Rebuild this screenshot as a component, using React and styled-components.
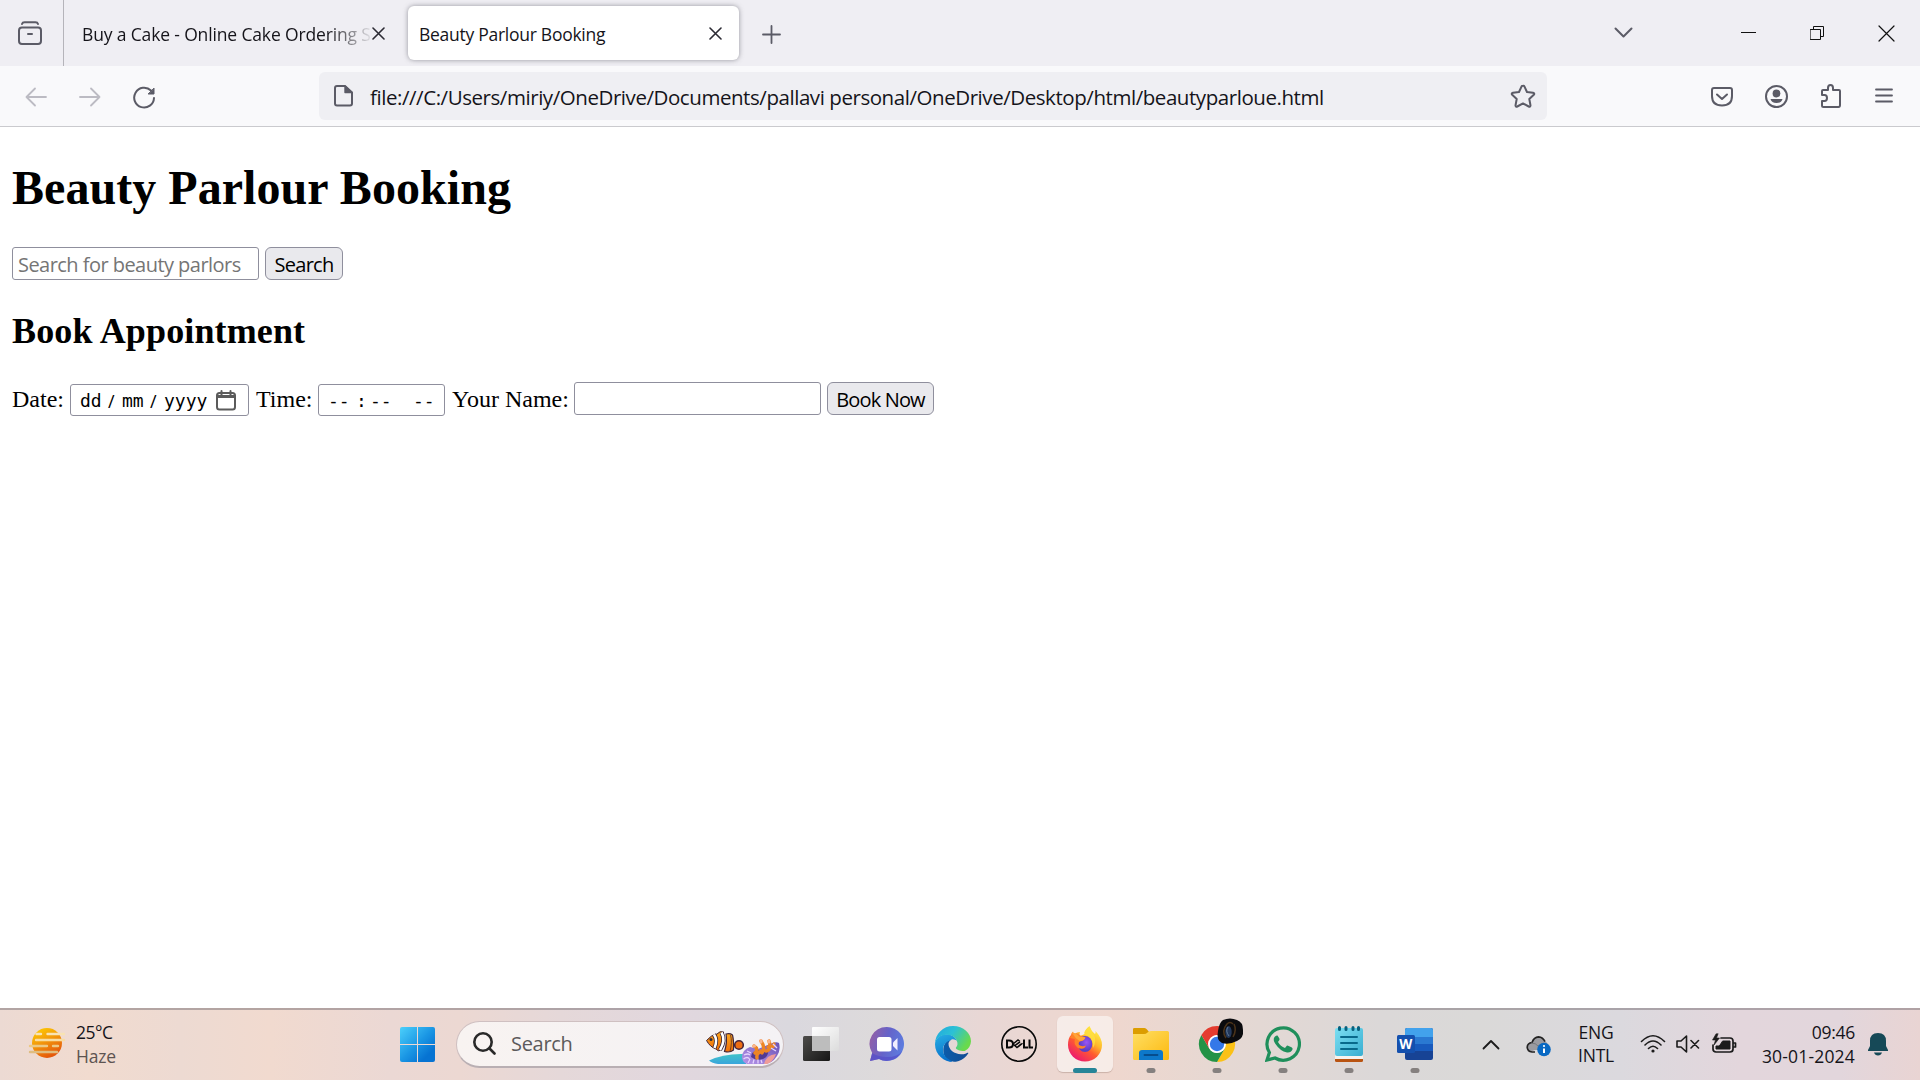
import React from "react";
import styled, { createGlobalStyle } from "styled-components";

const Global = createGlobalStyle`
  * { box-sizing: border-box; }
  html, body, #root { height: 100%; }
  body { margin: 0; overflow: hidden; background: #fff; }
  svg { display: block; flex: none; }
`;

const ui = `"Open Sans", "Noto Sans", sans-serif`;
const serif = `"Liberation Serif", "Times New Roman", serif`;

const Screen = styled.div`
  width: 1920px;
  height: 1080px;
  display: flex;
  flex-direction: column;
  font-family: ${ui};
  color: #15141a;
`;

const Label = styled.span`
  font-size: ${(p) => p.$size}px;
  letter-spacing: ${(p) => p.$track || 0}px;
  line-height: ${(p) => p.$line || 24}px;
  color: ${(p) => p.$color || "inherit"};
  white-space: nowrap;
`;

/* ---------- browser chrome ---------- */

const TabStrip = styled.header`
  display: flex;
  height: 66px;
  flex: none;
  background: #efeef3;
`;

const RecentButton = styled.div`
  width: 64px;
  padding: 21px 0 0 17px;
  border-right: 1px solid #b5b4ba;
`;

const Tab = styled.div`
  display: flex;
  align-items: center;
  width: 331px;
  height: 54px;
  margin: 6px 0 0 ${(p) => p.$gap}px;
  padding: 0 17px 0 ${(p) => p.$indent}px;
  justify-content: space-between;
  border-radius: 6px;
  background: ${(p) => (p.$active ? "#fff" : "transparent")};
  box-shadow: ${(p) => (p.$active ? "0 0 5px rgba(90, 90, 100, 0.6)" : "none")};
`;

const TabTitle = styled(Label)`
  width: 289px;
  padding-top: 1px;
  mask-image: ${(p) => (p.$fade ? "linear-gradient(to right, #000 245px, transparent 292px)" : "none")};
`;

const NewTab = styled.div`
  padding: 25px 0 0 23px;
`;

const WindowControls = styled.div`
  display: flex;
  align-items: center;
  margin-left: auto;
  padding-right: 25px;
`;

const Spaced = styled.div`
  margin-left: ${(p) => p.$left || 0}px;
  padding-top: ${(p) => p.$drop || 0}px;
`;

const NavBar = styled.nav`
  display: flex;
  align-items: center;
  height: 61px;
  flex: none;
  padding: 0 26px 0 24px;
  background: #f9f9fb;
  border-bottom: 1px solid #cacace;
`;

const AddressBar = styled.div`
  display: flex;
  align-items: center;
  width: 1228px;
  height: 48px;
  margin-left: 163px;
  padding: 0 11px 0 13px;
  border-radius: 6px;
  background: #efeff3;
`;

const Address = styled(Label)`
  margin-left: 16px;
  padding-top: 1px;
  flex: 1;
`;

/* ---------- page ---------- */

const Page = styled.main`
  flex: 1;
  min-height: 0;
  padding: 0 12px;
  background: #fff;
  font-family: ${serif};
  font-size: 24px;
  color: #000;
`;

const Title = styled.h1`
  margin: 0;
  padding-top: 33px;
  font-size: 48px;
  line-height: 55px;
  letter-spacing: 0.05px;
`;

const Subtitle = styled.h2`
  margin: 31px 0 0;
  font-size: 36px;
  line-height: 41px;
  letter-spacing: 0.13px;
`;

const Row = styled.div`
  display: flex;
  align-items: flex-start;
  margin-top: ${(p) => p.$top}px;
`;

const TextField = styled.input`
  width: ${(p) => p.$width}px;
  height: 33px;
  margin: 0 6px 0 0;
  padding: 1px 5px 0;
  border: 1px solid #8f8f9d;
  border-radius: 3px;
  outline: none;
  background: #fff;
  font: 20px ${ui};
  letter-spacing: -0.54px;
  &::placeholder { color: #757575; opacity: 1; }
`;

const Button = styled.button`
  width: ${(p) => p.$width}px;
  height: 33px;
  padding: 1px 0 0;
  border: 1px solid #8f8f9d;
  border-radius: 6px;
  background: #e9e9ed;
  color: #000;
  font: 20px ${ui};
  letter-spacing: ${(p) => p.$track}px;
  white-space: nowrap;
`;

const FieldLabel = styled.label`
  width: ${(p) => p.$width}px;
  line-height: 28px;
  margin-top: 3px;
  white-space: nowrap;
`;

const PickerField = styled.div`
  display: flex;
  align-items: center;
  width: ${(p) => p.$width}px;
  height: 32px;
  margin: 2px 7px 0 0;
  padding-left: 9px;
  border: 1px solid #8f8f9d;
  border-radius: 3px;
  font-family: "DejaVu Sans Mono", monospace;
  font-size: 18px;
`;

const Part = styled.span`
  width: ${(p) => p.$width}px;
  line-height: 28px;
  padding-top: 1px;
  font-family: ${(p) => (p.$mono ? "inherit" : ui)};
  white-space: pre;
`;

/* ---------- taskbar ---------- */

const Taskbar = styled.footer`
  display: flex;
  align-items: center;
  height: 72px;
  flex: none;
  padding-bottom: 2px;
  border-top: 2px solid rgba(120, 110, 115, 0.5);
  background: linear-gradient(to right, #ecdad3 0, #f1dbcf 90px, #eddad2 180px, #f1dacf 270px, #ebd8d4 390px, #ecd8d2 460px,
    #e5d8d9 560px, #e1d7de 680px, #dad8de 790px, #dddadb 880px, #e8d7d5 980px, #efd7ce 1110px,
    #e5d8d3 1230px, #dbd8d8 1380px, #dad9d8 1480px, #dbd9de 1620px, #e3d6dc 1740px, #e2d6dc 1840px, #e9d4d3 1920px);
  background-origin: border-box;
`;

const Weather = styled.div`
  display: flex;
  align-items: center;
  width: 400px;
  padding-left: 28px;
`;

const Stack = styled.div`
  display: flex;
  flex-direction: column;
  align-items: ${(p) => p.$align || "flex-start"};
  width: ${(p) => (p.$width ? p.$width + "px" : "auto")};
  margin-left: ${(p) => p.$left || 0}px;
`;

const SearchPill = styled.div`
  display: flex;
  align-items: center;
  width: 328px;
  height: 47px;
  margin-left: 21px;
  padding-left: 16px;
  border-radius: 24px;
  border: 1px solid #cfc0c1;
  border-bottom: 2px solid #b9afb3;
  background: linear-gradient(to right, #f8f3f1, #f4f2f5);
  overflow: hidden;
`;

const Apps = styled.div`
  display: flex;
  align-items: center;
  margin-left: 4px;
`;

const AppSlot = styled.div`
  display: flex;
  width: 56px;
  height: 56px;
  margin: 0 5px;
  align-items: center;
  justify-content: center;
  position: relative;
  border-radius: 6px;
  background: ${(p) => (p.$active ? "rgba(255,255,255,0.52)" : "transparent")};
  box-shadow: ${(p) => (p.$active ? "0 1px 1px rgba(120,90,80,0.3)" : "none")};
`;

const Indicator = styled.i`
  position: absolute;
  bottom: -1px;
  left: 50%;
  transform: translateX(-50%);
  width: ${(p) => (p.$active ? 24 : 9)}px;
  height: 5px;
  border-radius: 3px;
  background: ${(p) => (p.$active ? "#268598" : "#85807f")};
`;

const Tray = styled.div`
  display: flex;
  align-items: center;
  margin-left: auto;
  padding-right: 32px;
`;

function Icon({ w = 24, h, box, stroke = "#5b5b66", sw = 2, fill = "none", children }) {
  const hh = h || w;
  return (
    <svg width={w} height={hh} viewBox={box || `0 0 ${w} ${hh}`} fill={fill} stroke={stroke} strokeWidth={sw} strokeLinecap="round" strokeLinejoin="round">
      {children}
    </svg>
  );
}

const CloseIcon = () => (
  <Icon w={13} stroke="#2b2a33" sw={1.6}><path d="M1 1l11 11M12 1L1 12" /></Icon>
);

function HazeIcon() {
  return (
    <svg width="38" height="32" viewBox="0 0 38 32">
      <defs>
        <linearGradient id="haze" x1="0" y1="0" x2=".5" y2="1">
          <stop offset="0" stopColor="#ffd300" /><stop offset=".5" stopColor="#f39a0b" /><stop offset="1" stopColor="#e5590b" />
        </linearGradient>
      </defs>
      <circle cx="19" cy="15" r="15" fill="url(#haze)" />
      <g strokeLinecap="round" strokeWidth="2.4" fill="none">
        <path d="M8.500 6H13M19.500 6H36" stroke="#f8e3b4" />
        <path d="M8 12H36" stroke="#f8dda2" />
        <path d="M2 18H19M25 18H30" stroke="#ecc985" />
        <path d="M2 24H29" stroke="#dfbd80" />
      </g>
    </svg>
  );
}

function WindowsIcon() {
  return (
    <svg width="35" height="35" viewBox="0 0 35 35">
      <defs>
        <linearGradient id="win" x1="0" y1="0" x2="35" y2="35" gradientUnits="userSpaceOnUse">
          <stop offset="0" stopColor="#4cd0fb" /><stop offset=".5" stopColor="#1a96e4" /><stop offset=".8" stopColor="#0673d2" />
        </linearGradient>
      </defs>
      <g fill="url(#win)">
        <path d="M2 0H17V17H0V2Q0 0 2 0z" /><path d="M18 0H33Q35 0 35 2V17H18z" />
        <path d="M0 18H17V35H2Q0 35 0 33z" /><path d="M18 18H35V33Q35 35 33 35H18z" />
      </g>
    </svg>
  );
}

function ReefArt() {
  return (
    <svg width="76" height="40" viewBox="0 0 76 40">
      <defs>
        <linearGradient id="sea" x1="0" y1="0" x2="0" y2="1"><stop offset="0" stopColor="#40c3c8" /><stop offset="1" stopColor="#3aa5dc" /></linearGradient>
        <linearGradient id="shell" x1="0" y1="1" x2="1" y2="0"><stop offset="0" stopColor="#b796ea" /><stop offset="1" stopColor="#6a52b5" /></linearGradient>
        <linearGradient id="fish" x1="0" y1="0" x2="0" y2="1"><stop offset="0" stopColor="#fba51c" /><stop offset="1" stopColor="#ee6d0b" /></linearGradient>
      </defs>
      <path d="M3 36.500Q18 29 40 30V40H12Q6 39 3 36.500z" fill="url(#sea)" />
      <path d="M.5 16.500Q5 11 11 10Q14 6.500 17.500 8V12L15 26Q12 28 10 25Q4 23 .5 16.500z" fill="url(#fish)" stroke="#40263a" strokeWidth="1" />
      <path d="M8 10.500Q12 16 8.500 24M15.500 8.500Q20 16 14 26" stroke="#3a2636" strokeWidth="4.200" fill="none" />
      <path d="M8 10.500Q12 16 8.500 24M15.500 8.500Q20 16 14 26" stroke="#fff" strokeWidth="2.600" fill="none" />
      <path d="M20 10Q24 9 26.500 11Q28 17 27.500 26Q24 29 18.500 27.500Q21.500 18 20 10z" fill="url(#fish)" stroke="#40263a" strokeWidth="1.200" />
      <path d="M24.500 11Q26.500 18 24 27.500" stroke="#5a3022" strokeWidth=".8" fill="none" />
      <circle cx="5" cy="15.500" r="1.500" fill="#2a2c3c" />
      <circle cx="33" cy="21" r="4.300" fill="#ee6d14" stroke="#47253a" strokeWidth="1.600" />
      <path d="M36 33Q36 26 44 23L52 25L64 20Q70 17 73 19Q75 26 71 32Q66 40 58 40H41Q36 38 36 33z" fill="url(#shell)" />
      <path d="M58 40Q60 31 70 30Q67 38 61 40z" fill="#ef9d98" />
      <path d="M45 33Q45 27 53 26H62Q63 32 57 35Q50 37 45 33z" fill="#533a92" />
      <g stroke="#ee8424" strokeWidth="3.400" strokeLinecap="round" fill="none">
        <path d="M51 34Q50 30 55 27M49 29Q53 25 48 22M56 29Q60 24 55 17M60 27Q66 26 63 17M62 23Q68 24 68 20" />
      </g>
      <path d="M55 16.500v1.500M63 17v1M47.500 22h1" stroke="#f8b690" strokeWidth="3" strokeLinecap="round" />
      <path d="M38 31q4-2 6 0M37.500 35q4-3 6 0M42 39l2-4M47 39.500l1-4M52 39.500v-4M56 39l-1-3M67 20l4 4M65 24l5 3M41 27l4 2" stroke="#e5d2fd" strokeWidth="1.300" fill="none" />
    </svg>
  );
}

function TaskViewIcon() {
  return (
    <svg width="36" height="36" viewBox="0 0 36 36">
      <defs>
        <linearGradient id="tvd" x1="0" y1="0" x2="1" y2="1"><stop offset="0" stopColor="#4d4c4a" /><stop offset="1" stopColor="#161616" /></linearGradient>
        <linearGradient id="tvl" x1="0" y1="0" x2="1" y2="1"><stop offset="0" stopColor="#fff" /><stop offset="1" stopColor="#dcdcdc" /></linearGradient>
      </defs>
      <rect x="0" y="10" width="27" height="25" rx="1.500" fill="url(#tvd)" />
      <rect x="9" y="1" width="27" height="24" rx="1" fill="url(#tvl)" />
      <rect x="9" y="10" width="18" height="15" fill="#bdbdbd" />
    </svg>
  );
}

function ChatIcon() {
  return (
    <svg width="36" height="36" viewBox="0 0 36 36">
      <defs><linearGradient id="chat" x1="0" y1=".2" x2="1" y2=".5"><stop offset="0" stopColor="#955fa5" /><stop offset=".5" stopColor="#6563c9" /><stop offset="1" stopColor="#5d7cdf" /></linearGradient></defs>
      <path d="M18 1A17 17 0 1 1 10 33L1 35L3.200 27A17 17 0 0 1 18 1z" fill="url(#chat)" />
      <path d="M3.200 27Q9 31 18 31Q29 31 33 25A17 17 0 0 1 10 33L1 35z" fill="#554fca" opacity=".75" />
      <rect x="8" y="11" width="14.500" height="14.500" rx="2.500" fill="#fff" />
      <path d="M24 16.500L28.500 12V24.500L24 20z" fill="#f1efff" />
    </svg>
  );
}

function EdgeIcon() {
  return (
    <svg width="36" height="36" viewBox="0 0 256 256">
      <defs>
        <linearGradient id="edgeA" x1="0" y1="0" x2="1" y2="0"><stop offset="0" stopColor="#0b5cab" /><stop offset="1" stopColor="#124b93" /></linearGradient>
        <linearGradient id="edgeB" x1="0" y1="0" x2=".3" y2="1"><stop offset="0" stopColor="#28afe4" /><stop offset="1" stopColor="#0870cb" /></linearGradient>
        <linearGradient id="edgeC" x1="0" y1="0" x2="1" y2=".5"><stop offset="0" stopColor="#20a7e0" /><stop offset=".5" stopColor="#2cc1d5" /><stop offset="1" stopColor="#69da4c" /></linearGradient>
      </defs>
      <path d="M231 190a94 94 0 0 1-10 5 102 102 0 0 1-36 6c-47 0-89-32-89-74 0-11 7-22 17-28-43 2-54 47-54 73 0 74 68 82 83 82 8 0 20-2 27-5a128 128 0 0 0 67-53c3-5-2-8-5-6z" fill="url(#edgeA)" />
      <path d="M106 241a79 79 0 0 1-49-70c0-37 20-62 56-72 2-1 8-4 15-4 11 0 21 5 27 13-7-31-43-49-73-49C39 59 0 91 0 130c0 76 65 126 128 126-8-2-14-9-22-15z" fill="url(#edgeB)" />
      <path d="M152 149c-1 1-4 3-4 7s3 7 7 10c20 14 57 12 57 12a84 84 0 0 0 44-70C256 53 204 0 128 0 58 0 1 55 0 128c4-36 39-65 82-65 3 0 65-2 77 55 4 19-5 29-7 31z" fill="url(#edgeC)" />
    </svg>
  );
}

function DellIcon() {
  return (
    <svg width="36" height="36" viewBox="0 0 36 36">
      <circle cx="18" cy="18" r="17.200" fill="none" stroke="#080808" strokeWidth="1.600" />
      <g fill="none" stroke="#080808" strokeWidth="2">
        <path d="M6 14.500h2q4 0 4 3.500t-4 3.500h-2z" />
        <path d="M12 18L17 14L19 15.500M12 18L16 21.500L20 18M14 19.500L19 15.800M17 21L21.500 17.200" strokeWidth="1.500" />
        <path d="M23 13.500v8h4M28.500 13.500v8h3.500" />
      </g>
    </svg>
  );
}

function FirefoxIcon() {
  return (
    <svg width="36" height="36" viewBox="0 0 36 36">
      <defs>
        <linearGradient id="ffA" x1=".85" y1=".1" x2=".25" y2=".95"><stop offset="0" stopColor="#fff04a" /><stop offset=".35" stopColor="#ffb82a" /><stop offset=".6" stopColor="#ff5b2f" /><stop offset="1" stopColor="#ed1a6f" /></linearGradient>
        <radialGradient id="ffB" cx=".6" cy=".4"><stop offset="0" stopColor="#9a55f5" /><stop offset="1" stopColor="#5b3fc4" /></radialGradient>
      </defs>
      <path d="M22.500 0Q24 5 28 8Q29 7 28.500 5Q35 12 35 19A17 16.500 0 0 1 1 19Q1 12 4 9Q4 7 6 5.500Q6 7 8 7.500Q10 6 13 6Q12 8 13 10L18 8Q17 4 22.500 0z" fill="url(#ffA)" />
      <ellipse cx="18" cy="18" rx="7.300" ry="8" fill="url(#ffB)" />
      <path d="M3 12Q5 7 11 8Q14 10.500 18.500 11.500Q17 15 13 15.500Q11 16.500 12 19Q15 21 19 19.500Q17 24.500 11 22Q6 18 8 13z" fill="#ff8228" />
      <path d="M5 7Q10 7 12 10.500L18.500 11.500Q17 15 12.500 15Q8 12 5 7z" fill="#ffa437" />
      <path d="M18 9Q27 11 26 22Q30 15 27 9L22.500 1Q15 6 18 9z" fill="#ffe13f" opacity=".8" />
    </svg>
  );
}

function FolderIcon() {
  return (
    <svg width="36" height="36" viewBox="0 0 36 36">
      <defs><linearGradient id="fold" x1="0" y1="0" x2="1" y2="1"><stop offset="0" stopColor="#ffdf63" /><stop offset="1" stopColor="#fcb910" /></linearGradient></defs>
      <path d="M0 3Q0 2 1.500 2H11.500Q13 2 14 3.500L16 6V14H0z" fill="#dc9d00" />
      <path d="M0 8H11Q13 8 14.500 6.500Q16 5 18 5H34.500Q36 5 36 6.500V32.500Q36 34 34.500 34H1.500Q0 34 0 32.500z" fill="url(#fold)" />
      <path d="M6 34V27Q6 24 9 24H27Q30 24 30 27V34z" fill="#0d78ca" />
      <path d="M11.500 29H24.500" stroke="#064d8d" strokeWidth="1.800" strokeLinecap="round" />
    </svg>
  );
}

const Overflowing = styled.svg`
  overflow: visible;
`;

function ChromeIcon() {
  return (
    <Overflowing width="36" height="36" viewBox="0 0 36 36">
      <path d="M18 9H33.600A18 18 0 0 1 18 36L25.800 22.500z" fill="#fbc116" />
      <path d="M2.400 9L10.200 22.500Q13 27 18 27Q22 27 25.800 22.500L18 36A18 18 0 0 1 2.400 9z" fill="#249346" />
      <path d="M2.400 9A18 18 0 0 1 33.600 9H18Q9 10 10.200 22.500z" fill="#e43b2f" />
      <circle cx="18" cy="18" r="9" fill="#fff" /><circle cx="18" cy="18" r="7.200" fill="#3478e8" />
      <path d="M24-6Q31-9 38-6Q44-4 44 4Q45 12 38 15Q30 19 23 17Q17 14 19 5Q20-3 24-6z" fill="#0b0b0e" />
      <path d="M27 12Q22 5 28-2M34 11Q38 4 35-2M28-2Q31-5 34-2" fill="none" stroke="#6e4a20" strokeWidth="1.500" opacity=".65" />
      <ellipse cx="29.500" cy="6" rx="3.200" ry="6" fill="#24395c" /><path d="M29 1q-3 4 1 9" stroke="#66809f" strokeWidth=".9" fill="none" />
    </Overflowing>
  );
}

function WhatsAppIcon() {
  return (
    <svg width="36" height="36" viewBox="0 0 36 36">
      <path d="M2 34L4.400 26.500A16.200 16.200 0 1 1 10 32z" fill="none" stroke="#1f8f5b" strokeWidth="3.200" />
      <path d="M12.500 9.500Q11 9 9.500 11Q7.500 14 10.500 18Q15 25 22 26.500Q26 27 27.500 23.500Q28 22 26.500 21.300L23 19.700Q22 19.300 21.200 20.400L20 22Q15.500 20.500 13 16L14.200 14.300Q14.800 13.500 14.400 12.500z" fill="#1f8f5b" />
    </svg>
  );
}

function NotepadIcon() {
  return (
    <svg width="36" height="36" viewBox="0 0 36 36">
      <defs><linearGradient id="note" x1="0" y1="0" x2="1" y2="1"><stop offset="0" stopColor="#7cdff2" /><stop offset="1" stopColor="#39aed1" /></linearGradient></defs>
      <path d="M4 30H32V34.500Q32 36 30.500 36H5.500Q4 36 4 34.500z" fill="#b95412" />
      <path d="M4 28H32V33H4z" fill="#f7f3ef" />
      <rect x="4" y="2" width="28" height="28" rx="2" fill="url(#note)" />
      <path d="M8.500 1.500v2M15 1.500v2M22 1.500v2M27.500 1.500v2" stroke="#08617e" strokeWidth="3" strokeLinecap="round" />
      <path d="M10 11H26M10 17H26M10 23H26" stroke="#08698b" strokeWidth="2" strokeLinecap="round" />
    </svg>
  );
}

const WordLetter = styled.text`
  font: 700 13.500px ${ui};
  fill: #fff;
`;

function WordIcon() {
  return (
    <svg width="36" height="36" viewBox="0 0 36 36">
      <rect x="8" y="2" width="28" height="32" rx="2" fill="#174395" />
      <path d="M8 11V4Q8 2 10 2H34Q36 2 36 4V11z" fill="#42a2ec" />
      <path d="M8 11H36V18H8z" fill="#2a79d2" /><path d="M8 18H36V25H8z" fill="#185abd" />
      <rect x="0" y="9" width="18" height="18" rx="1.500" fill="#1450ae" />
      <WordLetter x="2.200" y="22.800">W</WordLetter>
    </svg>
  );
}

const CloudBadge = () => (
  <svg width="25" height="22" viewBox="0 0 25 22">
    <path d="M5 16.500Q1 15.500 1.200 11.500Q1.700 8 5.500 7.500Q7 2 12 2Q17 2 18.500 6.500Q22 7 22 11V15H9z" fill="#9b9ba0" />
    <path d="M9 17H6Q1.500 16.500 1.200 12.200Q1.500 8 6 7.500Q8 2 12.500 1.800Q17 2 19 6.700" fill="none" stroke="#222" strokeWidth="1.700" />
    <path d="M5 8Q10 8 12 11L17 9" stroke="#77787b" fill="none" />
    <circle cx="18" cy="14.500" r="6.800" fill="#0969c3" />
    <path d="M18 13.500V18" stroke="#fff" strokeWidth="2" /><circle cx="18" cy="11" r="1.100" fill="#fff" />
  </svg>
);

const apps = [
  { name: "taskview", art: <TaskViewIcon /> },
  { name: "chat", art: <ChatIcon /> },
  { name: "edge", art: <EdgeIcon /> },
  { name: "dell", art: <DellIcon /> },
  { name: "firefox", art: <FirefoxIcon />, active: true },
  { name: "folder", art: <FolderIcon />, open: true },
  { name: "chrome", art: <ChromeIcon />, open: true },
  { name: "whatsapp", art: <WhatsAppIcon />, open: true },
  { name: "notepad", art: <NotepadIcon />, open: true },
  { name: "word", art: <WordIcon />, open: true },
];

function BrowserTabs() {
  return (
    <TabStrip>
      <RecentButton>
        <Icon w={26} h={24} sw={2}>
          <path d="M5 3Q5.500 1.300 7.500 1.300H18.500Q20.500 1.300 21 3" />
          <rect x="2" y="6.500" width="22" height="16.500" rx="3" /><path d="M11 13H15" />
        </Icon>
      </RecentButton>
      <Tab $gap={7} $indent={11}>
        <TabTitle $fade $size={17.5} $track={-0.15}>Buy a Cake - Online Cake Ordering S</TabTitle>
        <CloseIcon />
      </Tab>
      <Tab $active $gap={6} $indent={11}>
        <TabTitle $size={17.5} $track={-0.27}>Beauty Parlour Booking</TabTitle>
        <CloseIcon />
      </Tab>
      <NewTab><Icon w={19} sw={1.8}><path d="M9.500 1V18M1 9.500H18" /></Icon></NewTab>
      <WindowControls>
        <Icon w={19} h={12}><path d="M1.500 1.500L9.500 9.500L17.500 1.500" /></Icon>
        <Spaced $left={108}><Icon w={15} h={3} sw={1} stroke="#111"><path d="M0 .5H15" /></Icon></Spaced>
        <Spaced $left={54}><Icon w={15} sw={1} stroke="#111"><path d="M.5 3.500H10.500V13.500H.5zM3.500 3.500V.5H13.500V10.500H10.500" /></Icon></Spaced>
        <Spaced $left={53}><Icon w={17} sw={1.2} stroke="#111"><path d="M1 1L16 16M16 1L1 16" /></Icon></Spaced>
      </WindowControls>
    </TabStrip>
  );
}

function Navigation() {
  return (
    <NavBar>
      <Spaced $drop={2}><Icon stroke="#bcbbc3" sw={1.8}><path d="M22 12H2.500M11 3.500L2.500 12L11 20.500" /></Icon></Spaced>
      <Spaced $left={30} $drop={2}><Icon stroke="#bcbbc3" sw={1.8}><path d="M2 12H21.500M13 3.500L21.500 12L13 20.500" /></Icon></Spaced>
      <Spaced $left={30} $drop={2}>
        <Icon><path d="M22 13A9.900 9.900 0 1 1 19 5.500" /><path d="M22 3.500V9H16.500z" fill="#5b5b66" strokeWidth="1" /></Icon>
      </Spaced>
      <AddressBar>
        <Icon w={22}><path d="M5 1H13L20 7.500V18.500Q20 20.500 18 20.500H5Q3 20.500 3 18.500V3Q3 1 5 1z" /><path d="M13 1V7.500H20z" fill="#5b5b66" strokeWidth="1.400" /></Icon>
        <Address $size={20.5} $track={-0.44} $line={28}>
          file:///C:/Users/miriy/OneDrive/Documents/pallavi personal/OneDrive/Desktop/html/beautyparloue.html
        </Address>
        <Icon w={26} h={24}><path d="M13 1.800Q14 1.500 14.500 2.600L17 8L23 8.800Q25 9.500 23.800 10.800L19.300 15L20.500 21.500Q20.300 23.200 18.700 22.500L13 19.400L7.300 22.500Q5.700 23.200 5.500 21.500L6.700 15L2.200 10.800Q1 9.500 3 8.800L9 8L11.500 2.600Q12 1.700 13 1.800z" /></Icon>
      </AddressBar>
      <Spaced $left={163} $drop={1}><Icon w={24} h={22}><path d="M4 2H20Q22 2 22 4V10Q22 19.500 12 19.500Q2 19.500 2 10V4Q2 2 4 2zM7 8.500L12 13L17 8.500" /></Icon></Spaced>
      <Spaced $left={30} $drop={1}><Icon w={25}><circle cx="12.500" cy="12.500" r="10.500" /><circle cx="12.500" cy="9.500" r="3.900" fill="#5b5b66" stroke="none" /><path d="M6.500 15H18.500Q17.500 19 12.500 19T6.500 15z" fill="#5b5b66" stroke="none" /></Icon></Spaced>
      <Spaced $left={30}><Icon w={24} h={26}><path d="M3 12V8Q3 7 4 7H9V5Q9 2 11.500 2T14 5V7H20Q21 7 21 8V22Q21 24 19.500 24H4.500Q3 24 3 22.500V18H5.500Q8 18 8 15T5.500 12z" /></Icon></Spaced>
      <Spaced $left={31}><Icon w={20} h={18} sw={1.8}><path d="M2 2.500H18M2 8.500H18M2 14.500H18" /></Icon></Spaced>
    </NavBar>
  );
}

function BookingPage() {
  return (
    <Page>
      <Title>Beauty Parlour Booking</Title>
      <Row $top={32}>
        <TextField $width={247} placeholder="Search for beauty parlors" />
        <Button $width={78} $track={-0.75}>Search</Button>
      </Row>
      <Subtitle>Book Appointment</Subtitle>
      <Row $top={30}>
        <FieldLabel $width={58}>Date:</FieldLabel>
        <PickerField $width={179}>
          <Part $mono $width={28}>dd</Part><Part $width={14}>/</Part>
          <Part $mono $width={28}>mm</Part><Part $width={14}>/</Part>
          <Part $mono $width={52}>yyyy</Part>
          <Icon w={20} h={21} stroke="#5b5b5b"><rect x="1" y="3" width="18" height="16.500" rx="2.500" /><path d="M2 5H18V8H2z" fill="#5b5b5b" stroke="none" /><path d="M5.500 1V5M14.500 1V5" /></Icon>
        </PickerField>
        <FieldLabel $width={62}>Time:</FieldLabel>
        <PickerField $width={127}>
          <Part $mono $width={28}>--</Part><Part $mono $width={14}>:</Part>
          <Part $mono $width={43}>--</Part><Part $mono $width={23}>--</Part>
        </PickerField>
        <FieldLabel $width={122}>Your Name:</FieldLabel>
        <TextField $width={247} />
        <Button $width={107} $track={-0.85}>Book Now</Button>
      </Row>
    </Page>
  );
}

function SystemBar() {
  return (
    <Taskbar>
      <Weather>
        <HazeIcon />
        <Stack $left={10}>
          <Label $size={17.5} $track={-0.5}>25°C</Label>
          <Label $size={17.5} $track={-0.2} $color="#5d5451">Haze</Label>
        </Stack>
      </Weather>
      <WindowsIcon />
      <SearchPill>
        <Icon w={23} stroke="#292929" sw={2.6}><circle cx="10" cy="10" r="8.700" /><path d="M16.500 16.500L21.500 21.500" /></Icon>
        <Stack $left={15} $width={195}><Label $size={20} $track={-0.3} $color="#5c5a5b">Search</Label></Stack>
        <ReefArt />
      </SearchPill>
      <Apps>
        {apps.map((a) => (
          <AppSlot key={a.name} $active={a.active}>
            {a.art}
            {(a.open || a.active) && <Indicator $active={a.active} />}
          </AppSlot>
        ))}
      </Apps>
      <Tray>
        <Icon w={18} h={11} stroke="#1b1b1b" sw={1.8}><path d="M1.500 9.500L9 2L16.500 9.500" /></Icon>
        <Spaced $left={26} $drop={3}><CloudBadge /></Spaced>
        <Stack $left={27} $width={36} $align="center">
          <Label $size={17.5} $track={-0.25} $line={23}>ENG</Label>
          <Label $size={17.5} $track={-0.25} $line={23}>INTL</Label>
        </Stack>
        <Spaced $left={26}>
          <Icon w={26} h={20} stroke="#1b1b1b" sw={1.6}><path d="M1.500 7.500Q13-4 24.500 7.500M5 11Q13 3 21 11M8.500 14.500Q13 10 17.500 14.500" /><circle cx="13" cy="17" r="1.600" fill="#1b1b1b" stroke="none" /></Icon>
        </Spaced>
        <Spaced $left={10}>
          <Icon w={24} h={18} stroke="#1b1b1b" sw={1.6}><path d="M1 6H5L10.500 1V17L5 12H1zM15 5.500L22.500 13M22.500 5.500L15 13" /></Icon>
        </Spaced>
        <Spaced $left={11}>
          <Icon w={26} h={22} stroke="#1b1b1b" sw={1.7}><path d="M10 5H19Q22 5 22 8V16Q22 19 19 19H5Q2 19 2 16V12M22.500 10H24.500V14H22.500" /><path d="M12 8H19V16H5V13H8z" fill="#1b1b1b" strokeWidth="1" /><path d="M5 1L1.500 7H4.500L3 12L8.500 5H5.500L7 1z" fill="#1b1b1b" strokeWidth=".6" /></Icon>
        </Spaced>
        <Stack $left={24} $width={94} $align="flex-end">
          <Label $size={17.5} $track={-0.25}>09:46</Label>
          <Label $size={17.5} $track={0.18}>30-01-2024</Label>
        </Stack>
        <Spaced $left={13}>
          <Icon w={20} h={24} stroke="none" fill="#164957"><path d="M10 1Q18 1 18 9V14L20 18V19H0V18L2 14V9Q2 1 10 1zM6 20.500H14Q13 23.500 10 23.500T6 20.500z" /></Icon>
        </Spaced>
      </Tray>
    </Taskbar>
  );
}

export default function App() {
  return (
    <Screen>
      <Global />
      <BrowserTabs />
      <Navigation />
      <BookingPage />
      <SystemBar />
    </Screen>
  );
}
